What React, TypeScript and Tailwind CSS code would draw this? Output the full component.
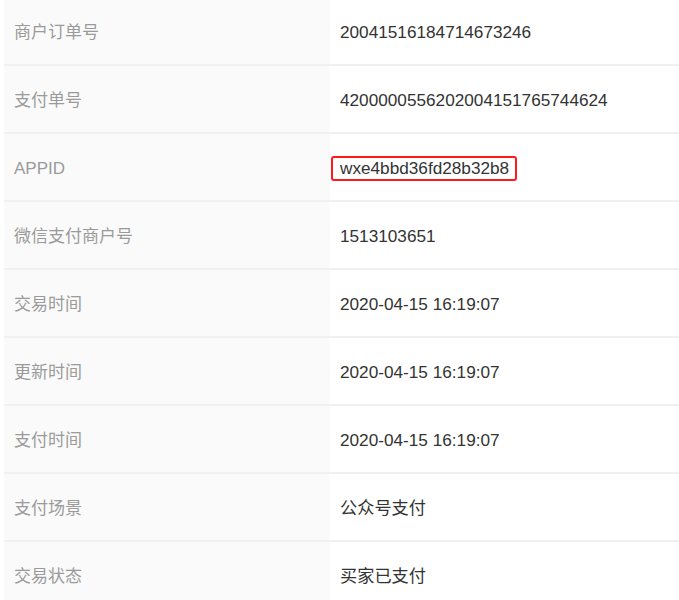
const rows: { label: string; value: string; boxed?: boolean }[] = [
  { label: "商户订单号", value: "20041516184714673246" },
  { label: "支付单号", value: "4200000556202004151765744624" },
  { label: "APPID", value: "wxe4bbd36fd28b32b8", boxed: true },
  { label: "微信支付商户号", value: "1513103651" },
  { label: "交易时间", value: "2020-04-15 16:19:07" },
  { label: "更新时间", value: "2020-04-15 16:19:07" },
  { label: "支付时间", value: "2020-04-15 16:19:07" },
  { label: "支付场景", value: "公众号支付" },
  { label: "交易状态", value: "买家已支付" },
];

export default function App() {
  return (
    <div
      className="h-[600px] w-[679px] overflow-hidden bg-white pl-[4px]"
      style={{ fontFamily: '"Liberation Sans", "Noto Sans CJK SC", sans-serif' }}
    >
      <div className="-mt-[2px]">
        {rows.map((r) => (
          <div key={r.label} className="flex h-[68px] border-b-2 border-[#f0f0f0]">
            <div className="flex w-[326px] shrink-0 items-center bg-[#fafafa] pl-[10px] pt-[3px] text-[17px] text-[#9a9a9a]">
              {r.label}
            </div>
            <div className="flex flex-1 items-center pl-[10px] pt-[3px] text-[17.2px] text-[#333]">
              {r.boxed ? (
                <span className="-ml-[9px] rounded-[3px] border-2 border-[#ff1a1a] pl-[7px] pr-[6px] leading-[21px]">
                  {r.value}
                </span>
              ) : (
                r.value
              )}
            </div>
          </div>
        ))}
      </div>
    </div>
  );
}
